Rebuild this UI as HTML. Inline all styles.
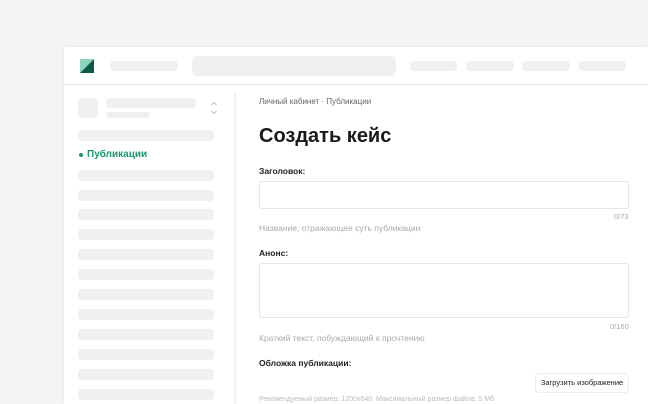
<!DOCTYPE html>
<html><head><meta charset="utf-8"><style>
*{margin:0;padding:0;box-sizing:border-box}
html,body{width:648px;height:404px;overflow:hidden}
body{background:#f4f4f4;font-family:"Liberation Sans",sans-serif;position:relative}
.a{position:absolute}
.g{position:absolute;background:#f0f0f0;border-radius:4px}
.t{position:absolute;white-space:nowrap}
</style></head><body>
<div class="a" style="left:64px;top:47px;width:584px;height:357px;background:#fff;box-shadow:0 0 6px rgba(0,0,0,.05)"></div>
<div class="a" style="left:64px;top:84px;width:584px;height:1px;background:#e8e8e8"></div>
<svg class="a" style="left:80px;top:59px" width="14" height="14"><polygon points="0,0 14,0 0,14" fill="#8fd3bd"/><polygon points="14,0 14,14 0,14" fill="#0d5a4d"/></svg>
<div class="g" style="left:110px;top:61px;width:68px;height:10px"></div>
<div class="g" style="left:192px;top:56px;width:204px;height:20px;border-radius:5px"></div>
<div class="g" style="left:410px;top:61px;width:47px;height:10px"></div>
<div class="g" style="left:466px;top:61px;width:48px;height:10px"></div>
<div class="g" style="left:522px;top:61px;width:48px;height:10px"></div>
<div class="g" style="left:579px;top:61px;width:47px;height:10px"></div>
<div class="a" style="left:234px;top:92px;width:2px;height:312px;background:#f3f3f3"></div>
<div class="g" style="left:78px;top:98px;width:20px;height:20px"></div>
<div class="g" style="left:106px;top:98px;width:90px;height:10px"></div>
<div class="g" style="left:106px;top:112px;width:44px;height:6px"></div>
<svg class="a" style="left:210px;top:101px" width="8" height="14"><path d="M1.5 4 L4 1.5 L6.5 4 M1.5 10 L4 12.5 L6.5 10" fill="none" stroke="#bbb" stroke-width="1"/></svg>
<div class="g" style="left:78px;top:130px;width:136px;height:11px"></div>
<div class="a" style="left:79px;top:153px;width:4px;height:4px;border-radius:50%;background:#1a9a6c"></div>
<div class="t" style="left:87px;top:149px;font-size:10px;font-weight:bold;color:#1a9a6c">Публикации</div>
<div class="g" style="left:78px;top:170px;width:136px;height:11px"></div>
<div class="g" style="left:78px;top:190px;width:136px;height:11px"></div>
<div class="g" style="left:78px;top:209px;width:136px;height:11px"></div>
<div class="g" style="left:78px;top:229px;width:136px;height:11px"></div>
<div class="g" style="left:78px;top:249px;width:136px;height:11px"></div>
<div class="g" style="left:78px;top:269px;width:136px;height:11px"></div>
<div class="g" style="left:78px;top:289px;width:136px;height:11px"></div>
<div class="g" style="left:78px;top:309px;width:136px;height:11px"></div>
<div class="g" style="left:78px;top:329px;width:136px;height:11px"></div>
<div class="g" style="left:78px;top:349px;width:136px;height:11px"></div>
<div class="g" style="left:78px;top:369px;width:136px;height:11px"></div>
<div class="g" style="left:78px;top:389px;width:136px;height:11px"></div>
<div class="t" style="left:259px;top:97px;font-size:8px;color:#666">Личный кабинет · Публикации</div>
<div class="t" style="left:259px;top:125px;font-size:20px;font-weight:bold;color:#1a1a1a">Создать кейс</div>
<div class="t" style="left:259px;top:166px;font-size:8.5px;font-weight:bold;color:#222">Заголовок:</div>
<div class="a" style="left:259px;top:181px;width:370px;height:28px;border:1px solid #e6e6e6;border-radius:3px"></div>
<div class="t" style="left:614px;top:212px;font-size:7.5px;color:#aaa">0/73</div>
<div class="t" style="left:259px;top:223px;font-size:8.5px;color:#aaa">Название, отражающее суть публикации</div>
<div class="t" style="left:259px;top:248px;font-size:8.5px;font-weight:bold;color:#222">Анонс:</div>
<div class="a" style="left:259px;top:263px;width:370px;height:55px;border:1px solid #e6e6e6;border-radius:3px"></div>
<div class="t" style="left:610px;top:322px;font-size:7.5px;color:#aaa">0/160</div>
<div class="t" style="left:259px;top:333px;font-size:8.5px;color:#aaa">Краткий текст, побуждающий к прочтению</div>
<div class="t" style="left:259px;top:358px;font-size:8.5px;font-weight:bold;color:#222">Обложка публикации:</div>
<div class="a" style="left:535px;top:373px;width:94px;height:20px;border:1px solid #ececec;border-radius:4px;font-size:7.5px;color:#222;text-align:center;line-height:18px">Загрузить изображение</div>
<div class="t" style="left:259px;top:396px;font-size:7px;color:#bbb">Рекомендуемый размер: 1200x640. Максимальный размер файла: 5 Мб</div>
</body></html>
